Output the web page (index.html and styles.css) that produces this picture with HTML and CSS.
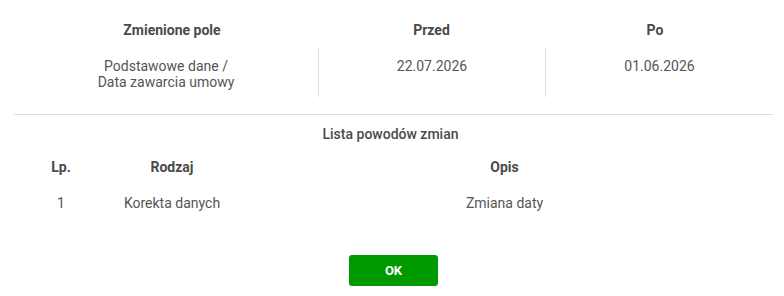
FILE: index.html
```html
<!DOCTYPE html>
<html lang="pl">
<head>
<meta charset="utf-8">
<link rel="stylesheet" href="styles.css">
</head>
<body>
<div class="dialog">
  <div class="changes">
    <div class="changes-head">
      <div class="th">Zmienione pole</div>
      <div class="th">Przed</div>
      <div class="th">Po</div>
    </div>
    <div class="changes-row">
      <div class="td">Podstawowe dane /<br>Data zawarcia umowy</div>
      <div class="td sep">22.07.2026</div>
      <div class="td sep">01.06.2026</div>
    </div>
  </div>
  <div class="reasons">
    <div class="reasons-title">Lista powodów zmian</div>
    <div class="reasons-grid">
      <div class="th">Lp.</div>
      <div class="th">Rodzaj</div>
      <div class="th">Opis</div>
      <div class="td">1</div>
      <div class="td">Korekta danych</div>
      <div class="td">Zmiana daty</div>
    </div>
  </div>
  <div class="actions">
    <button class="btn-ok">OK</button>
  </div>
</div>
</body>
</html>
```

FILE: styles.css
```css
html, body {
  margin: 0;
  padding: 0;
  background: #ffffff;
}
body {
  font-family: Roboto, "Liberation Sans", Arial, sans-serif;
  font-size: 14px;
  line-height: 16px;
  color: #555555;
}
.dialog {
  padding: 0 11px 0 14px;
}
.changes {
  border-bottom: 1px solid #dddddd;
  padding-bottom: 17px;
}
.changes-head,
.changes-row {
  display: grid;
  grid-template-columns: 304px 227px 228px;
}
.changes-head {
  padding-top: 22px;
  height: 26px;
}
.changes-head .th:first-child {
  padding-left: 12px;
}
.changes-head .th:last-child {
  padding-right: 8px;
}
.th {
  font-weight: 700;
  text-align: center;
  color: #4a4a4a;
}
.td {
  text-align: center;
}
.changes-row .td {
  padding: 10px 0 7px;
  min-height: 32px;
}
.changes-row .sep {
  border-left: 1px solid #dddddd;
}
.reasons-title {
  font-weight: 500;
  text-align: center;
  padding-top: 11px;
  margin-left: -6px;
  color: #4a4a4a;
}
.reasons-grid {
  display: grid;
  grid-template-columns: 94px 128px 537px;
  row-gap: 20px;
  padding-top: 17px;
}
.actions {
  display: flex;
  justify-content: center;
  padding-top: 44px;
}
.btn-ok {
  width: 89px;
  height: 31px;
  border: none;
  border-radius: 3px;
  background: #009a00;
  color: #ffffff;
  font-family: Roboto, "Liberation Sans", Arial, sans-serif;
  font-size: 13px;
  font-weight: 700;
  padding: 0;
}
```
